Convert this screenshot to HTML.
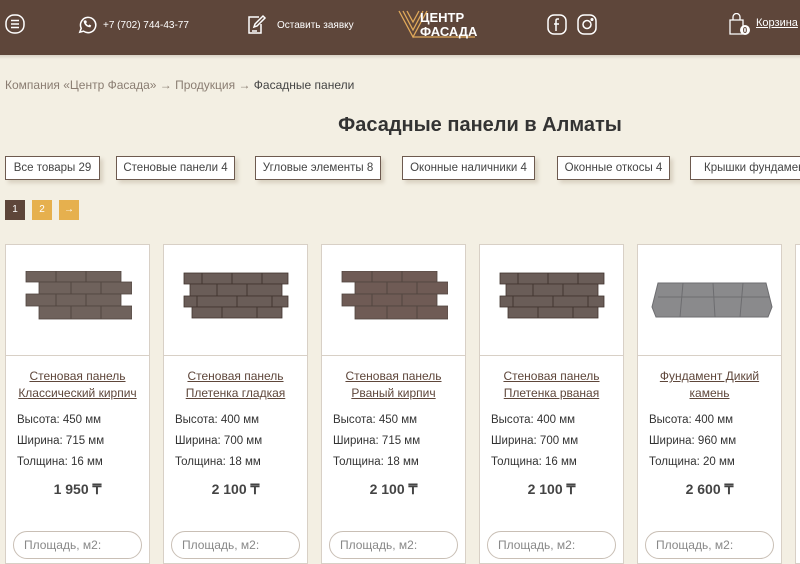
<!DOCTYPE html>
<html><head><meta charset="utf-8"><style>
*{box-sizing:border-box;margin:0;padding:0}
body{width:800px;height:559px;overflow:hidden;background:#f3efe3;font-family:"Liberation Sans",sans-serif;color:#333;position:relative}
.hdr{position:absolute;left:0;top:0;width:800px;height:55px;background:#5e463a;color:#fff}
.hdr .t{position:absolute;font-size:10px;color:#fff}
.shadow{position:absolute;top:55px;left:0;width:800px;height:4px;background:linear-gradient(#d9d3c6,#f3efe3)}
.bc{position:absolute;left:5px;top:78px;font-size:12px;color:#8a7d72}
.bc b{font-weight:normal;color:#444}
h1{position:absolute;left:0;width:960px;top:114px;text-align:center;font-size:20px;color:#333;font-weight:bold}
.tab{position:absolute;top:156px;height:24px;border:1px solid #6d5a4f;background:#fff;font-size:11.5px;line-height:22px;text-align:center;color:#444;box-shadow:3px 3px 4px #d8d0c0}
.pg{position:absolute;top:200px;width:20px;height:20px;color:#fff;font-size:10px;line-height:20px;text-align:center}
.card{position:absolute;top:244px;width:145px;height:320px;background:#fff;border:1px solid #d8d0c6}
.card .img{height:111px;border-bottom:1px solid #d8d0c6;position:relative}
.card .img svg{position:absolute;left:18px;top:26px}
.nm{text-align:center;font-size:12px;line-height:17px;color:#5e463a;text-decoration:underline;margin-top:12px}
.sp{font-size:11.5px;padding-left:11px;margin-top:8px;line-height:21px;color:#333}
.pr{text-align:center;font-weight:bold;font-size:14px;margin-top:8px;color:#444}
.in{position:absolute;left:7px;top:286px;width:129px;height:28px;border:1px solid #c9bfb5;border-radius:14px;font-size:12px;color:#888;padding-left:10px;line-height:26px}
</style></head><body>
<div class="hdr">
<svg style="position:absolute;left:4px;top:13px" width="22" height="22" viewBox="0 0 22 22" fill="none" stroke="#fff" stroke-width="1.5"><rect x="2" y="2" width="18" height="18" rx="8"/><path d="M7 7.5h8M7 11h8M7 14.5h8"/></svg>
<svg style="position:absolute;left:76px;top:14px" width="21" height="21" viewBox="0 0 22 22" fill="none" stroke="#fff" stroke-width="1.6"><path d="M4 19l1.5-4A8 8 0 1 1 8 18z"/><path d="M8 7c0 4 3 7 7 7l1-2-2-1-1 1c-1-.5-2-1.5-2.5-2.5l1-1-1-2z" fill="#fff" stroke="none"/></svg>
<div class="t" style="left:103px;top:20px">+7 (702) 744-43-77</div>
<svg style="position:absolute;left:246px;top:14px" width="22" height="22" viewBox="0 0 22 22" fill="none" stroke="#fff" stroke-width="1.5"><path d="M13 3H3v16h12V10"/><path d="M8 13l1-3 8-8 2 2-8 8z"/><path d="M6 17h5"/></svg>
<div class="t" style="left:277px;top:20px">Оставить заявку</div>
<svg style="position:absolute;left:398px;top:9px" width="80" height="32" viewBox="0 0 80 32" fill="none" stroke="#e0a95a" stroke-width="1.3"><path d="M1 2l14 26L29 2M5 2l10 19L25 2M9 2l6 11 6-11"/><path d="M15 28h62"/></svg>
<div class="t" style="left:420px;top:11px;font-size:13px;font-weight:bold;line-height:14px">ЦЕНТР<br>ФАСАДА</div>
<svg style="position:absolute;left:547px;top:14px" width="20" height="21" viewBox="0 0 20 21" fill="none" stroke="#fff" stroke-width="1.5"><rect x="1" y="1" width="18" height="19" rx="6"/><path d="M12 5h-1.5c-1 0-1.5.7-1.5 1.5V17M7 10h5"/></svg>
<svg style="position:absolute;left:577px;top:14px" width="20" height="21" viewBox="0 0 20 21" fill="none" stroke="#fff" stroke-width="1.5"><rect x="1" y="1" width="18" height="19" rx="6"/><circle cx="10" cy="10.5" r="4"/><circle cx="15" cy="5.5" r=".8" fill="#fff"/></svg>
<svg style="position:absolute;left:728px;top:13px" width="26" height="24" viewBox="0 0 26 24" fill="none" stroke="#fff" stroke-width="1.3"><path d="M2 7h13v14H2z"/><path d="M5 7V4a3.5 3.5 0 0 1 7 0v3"/><circle cx="17" cy="17" r="5" fill="#fff" stroke="none"/><text x="17" y="20" font-size="8" font-weight="bold" fill="#5e463a" stroke="none" text-anchor="middle" font-family="Liberation Sans">0</text></svg>
<div class="t" style="left:756px;top:17px;font-size:11px;text-decoration:underline">Корзина</div>
</div>
<div class="shadow"></div>
<div class="bc">Компания «Центр Фасада» → Продукция → <b>Фасадные панели</b></div>
<h1>Фасадные панели в Алматы</h1>
<div class="tab" style="left:5px;width:95px">Все товары 29</div>
<div class="tab" style="left:116px;width:119px">Стеновые панели 4</div>
<div class="tab" style="left:255px;width:126px">Угловые элементы 8</div>
<div class="tab" style="left:402px;width:133px">Оконные наличники 4</div>
<div class="tab" style="left:557px;width:113px">Оконные откосы 4</div>
<div class="tab" style="left:690px;width:140px">Крышки фундамента</div>
<div class="pg" style="left:5px;background:#5e463a">1</div>
<div class="pg" style="left:32px;background:#e6b04e">2</div>
<div class="pg" style="left:59px;background:#e6b04e">→</div>

<div class="card" style="left:5px"><div class="img"><svg width="108" height="50" viewBox="0 0 108 50"><g fill="#6f625c" stroke="#51453f" stroke-width=".8"><rect x="2" y="0" width="95" height="11"/><rect x="15" y="11" width="93" height="12"/><rect x="2" y="23" width="95" height="12"/><rect x="15" y="35" width="93" height="13"/></g><path d="M32 0v11M62 0v11M47 11v12M77 11v12M32 23v12M62 23v12M47 35v13M77 35v13" stroke="#51453f"/></svg></div>
<div class="nm">Стеновая панель<br>Классический кирпич</div><div class="sp">Высота: 450 мм<br>Ширина: 715 мм<br>Толщина: 16 мм</div><div class="pr">1 950 ₸</div><div class="in">Площадь, м2:</div></div>

<div class="card" style="left:163px"><div class="img"><svg width="108" height="50" viewBox="0 0 108 50"><g fill="#6a5d58" stroke="#41352f" stroke-width=".8"><rect x="2" y="2" width="104" height="11"/><rect x="8" y="13" width="92" height="12"/><rect x="2" y="25" width="104" height="11"/><rect x="10" y="36" width="90" height="11"/></g><path d="M20 2v11M50 2v11M80 2v11M35 13v12M65 13v12M15 25v11M55 25v11M90 25v11M40 36v11M75 36v11" stroke="#41352f"/></svg></div>
<div class="nm">Стеновая панель<br>Плетенка гладкая</div><div class="sp">Высота: 400 мм<br>Ширина: 700 мм<br>Толщина: 18 мм</div><div class="pr">2 100 ₸</div><div class="in">Площадь, м2:</div></div>

<div class="card" style="left:321px"><div class="img"><svg width="108" height="50" viewBox="0 0 108 50"><g fill="#6f5b55" stroke="#51453f" stroke-width=".8"><rect x="2" y="0" width="95" height="11"/><rect x="15" y="11" width="93" height="12"/><rect x="2" y="23" width="95" height="12"/><rect x="15" y="35" width="93" height="13"/></g><path d="M32 0v11M62 0v11M47 11v12M77 11v12M32 23v12M62 23v12M47 35v13M77 35v13" stroke="#51453f"/></svg></div>
<div class="nm">Стеновая панель<br>Рваный кирпич</div><div class="sp">Высота: 450 мм<br>Ширина: 715 мм<br>Толщина: 18 мм</div><div class="pr">2 100 ₸</div><div class="in">Площадь, м2:</div></div>

<div class="card" style="left:479px"><div class="img"><svg width="108" height="50" viewBox="0 0 108 50"><g fill="#6a5d58" stroke="#41352f" stroke-width=".8"><rect x="2" y="2" width="104" height="11"/><rect x="8" y="13" width="92" height="12"/><rect x="2" y="25" width="104" height="11"/><rect x="10" y="36" width="90" height="11"/></g><path d="M20 2v11M50 2v11M80 2v11M35 13v12M65 13v12M15 25v11M55 25v11M90 25v11M40 36v11M75 36v11" stroke="#41352f"/></svg></div>
<div class="nm">Стеновая панель<br>Плетенка рваная</div><div class="sp">Высота: 400 мм<br>Ширина: 700 мм<br>Толщина: 16 мм</div><div class="pr">2 100 ₸</div><div class="in">Площадь, м2:</div></div>

<div class="card" style="left:637px"><div class="img"><svg style="left:10px" width="126" height="50" viewBox="0 0 126 50"><path d="M4 36L10 12h108l6 24-4 10H8z" fill="#8a8a8c" stroke="#6d6d70"/><path d="M35 12l-3 34M65 12l2 34M95 12l-3 34M10 26h112" stroke="#6d6d70" fill="none"/></svg></div>
<div class="nm">Фундамент Дикий<br>камень</div><div class="sp">Высота: 400 мм<br>Ширина: 960 мм<br>Толщина: 20 мм</div><div class="pr">2 600 ₸</div><div class="in">Площадь, м2:</div></div>

<div class="card" style="left:795px"></div>
</body></html>
